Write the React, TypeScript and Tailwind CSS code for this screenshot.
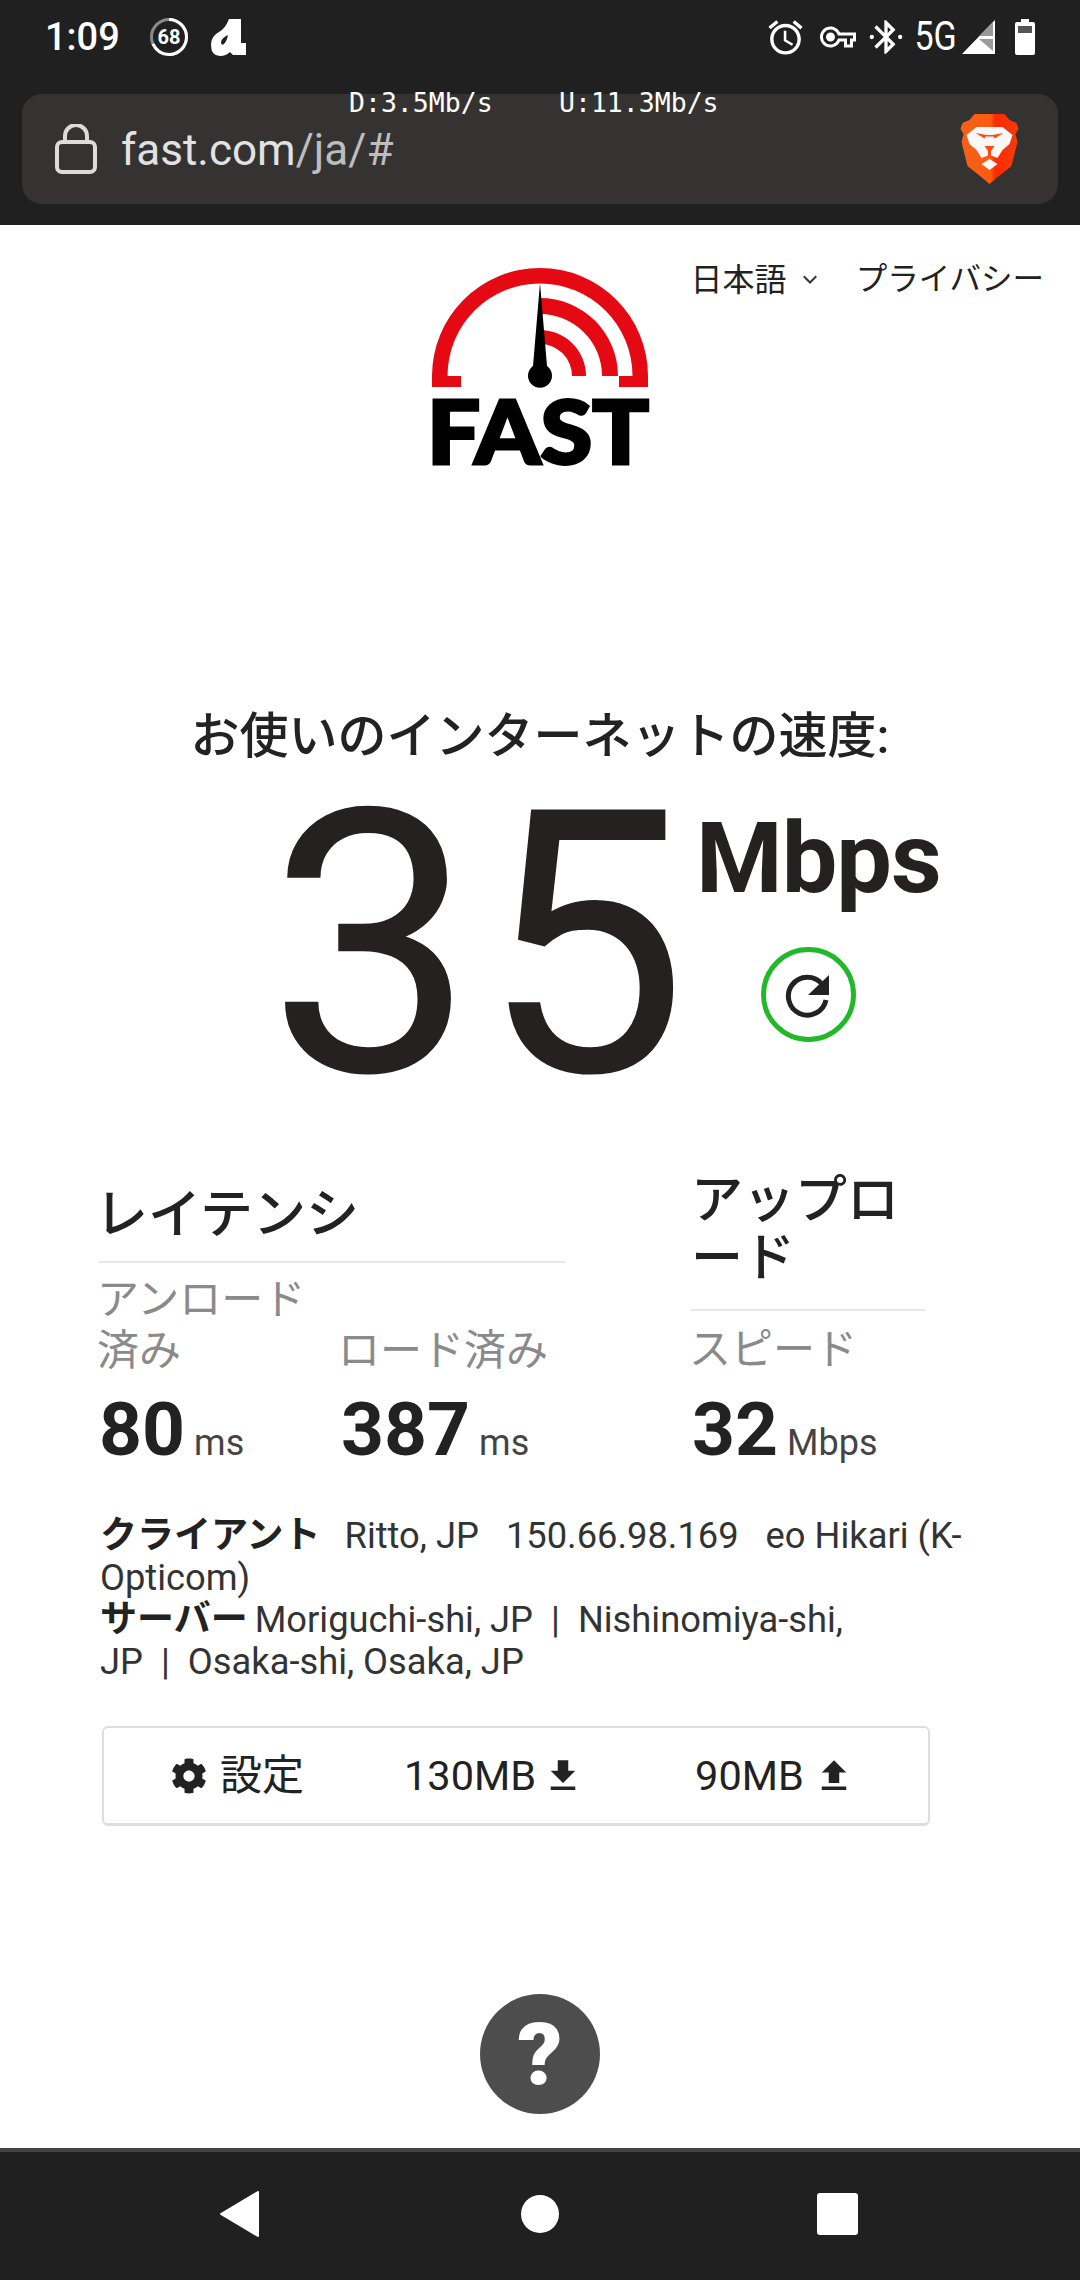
import { FaCog } from "react-icons/fa";

const sans = "font-['Roboto','Noto_Sans_CJK_JP',sans-serif]";

function Icon({ d, className }: { d: string; className: string }) {
  return (
    <svg viewBox="0 0 24 24" className={className} fill="currentColor">
      <path d={d} />
    </svg>
  );
}

function BraveLion() {
  return (
    <svg viewBox="0 0 58 70" className="w-[59px] h-[70px]">
      <defs>
        <linearGradient id="shield" x1="0" x2="1" y1="0" y2="0">
          <stop offset="0" stopColor="#f4601a" />
          <stop offset="0.52" stopColor="#ff5a10" />
          <stop offset="0.6" stopColor="#ff2a00" />
          <stop offset="1" stopColor="#f43c0c" />
        </linearGradient>
      </defs>
      <path
        d="M14 0h30l5 6 7 3 2 6-3 5 2 8-6 24-15 12-7 6-7-6-15-12-6-24 2-8-3-5 2-6 7-3z"
        fill="url(#shield)"
      />
      <path d="M16 13H42L52 21L49 30L42 36L37 44L29 41L21 44L16 36L9 30L6 21Z" fill="#f8f8f8" />
      <path d="M15 19L26 21H32L43 19L34 24.500L33 22.500H25L24 24.500Z" fill="#ff4a10" />
      <path d="M24 32H34L30.500 37V43H27.500V37Z" fill="#ff4a10" />
      <path d="M21 50L29 45L37 50L29 56Z" fill="#f8f8f8" />
    </svg>
  );
}

function FastLogo() {
  return (
    <svg viewBox="0 0 216 198" className="w-[216px] h-[198px] overflow-visible">
      <g fill="#e50914">
        <path d="M0 119V108A108 108 0 0 1 216 108V119H187V108H200.500A92.500 92.500 0 0 0 15.500 108H29V119Z" />
        <path d="M108 30A78 78 0 0 1 186 108H170A62 62 0 0 0 108 46Z" />
        <path d="M108 62A46 46 0 0 1 154 108H140A32 32 0 0 0 108 76Z" />
      </g>
      <path d="M108 15L115 98A12 12 0 1 1 101 98Z" fill="#000" />
      <text
        x="-5"
        y="196"
        textLength="222"
        lengthAdjust="spacingAndGlyphs"
        className="font-['Lato',sans-serif] font-black text-[87px]"
        fill="#000"
        stroke="#000"
        strokeWidth="3"
      >
        FAST
      </text>
    </svg>
  );
}

function StatusBar() {
  return (
    <div className="h-[94px] flex items-start justify-between pl-[45px] pr-[44px] pt-[17px] text-white">
      <div className="flex items-center h-[40px]">
        <span className="text-[38px] font-medium leading-none">1:09</span>
        {/* battery-style ring around the percentage */}
        <svg viewBox="0 0 40 40" className="ml-[29px] w-[40px] h-[40px]" fill="none" strokeWidth="3">
          <circle cx="20" cy="20" r="17.500" stroke="#8a8a8a" />
          <circle cx="20" cy="20" r="17.500" stroke="#fff" strokeDasharray="74.800 110" transform="rotate(-90 20 20)" />
          <text x="20" y="27" textAnchor="middle" fill="#fff" stroke="none" className="text-[20px] font-bold">68</text>
        </svg>
        <svg viewBox="0 0 36 37" className="ml-[22px] w-[36px] h-[37px]" fill="#fff">
          <path
            fillRule="evenodd"
            d="M18 0H30V24H35V36H22L19 33Q15 37 9 37Q0 37 0 26Q0 17 8 13Q14 10 18 0ZM17 16Q10 19 10 24Q11 27 13 25Q16 22 17 16Z"
          />
        </svg>
      </div>
      <div className="flex items-center h-[40px]">
        <Icon
          className="w-[41px] h-[41px] ml-[-1px]"
          d="M22 5.720l-4.600-3.860-1.290 1.530 4.600 3.860L22 5.720zM7.880 3.390L6.600 1.860 2 5.710l1.290 1.530 4.590-3.850zM12.500 8H11v6l4.750 2.850.75-1.230-4-2.370V8zM12 4c-4.970 0-9 4.030-9 9s4.020 9 9 9c4.970 0 9-4.030 9-9s-4.030-9-9-9zm0 16c-3.870 0-7-3.130-7-7s3.130-7 7-7 7 3.130 7 7-3.130 7-7 7z"
        />
        <Icon
          className="ml-[14px] w-[36px] h-[36px]"
          d="M22 19h-6v-4h-2.680c-1.140 2.420-3.600 4-6.320 4-3.860 0-7-3.140-7-7s3.140-7 7-7c2.720 0 5.170 1.580 6.320 4H24v6h-2v4zm-4-2h2v-4h2v-2H11.940l-.23-.67C11.010 8.340 9.110 7 7 7c-2.760 0-5 2.240-5 5s2.240 5 5 5c2.110 0 4.010-1.340 4.710-3.330l.23-.67H18v4zM7 15c-1.650 0-3-1.350-3-3s1.350-3 3-3 3 1.350 3 3-1.350 3-3 3z"
        />
        <svg viewBox="0 0 24 24" className="ml-[10px] w-[40px] h-[40px]" fill="#fff">
          <path d="M17.710 7.710L12 2h-1v7.590L6.410 5 5 6.410 10.590 12 5 17.590 6.410 19 11 14.410V22h1l5.710-5.710-4.300-4.290 4.300-4.290zM13 5.830l1.880 1.880L13 9.590V5.830zm1.880 10.460L13 18.170v-3.760l1.880 1.880z" />
          <circle cx="3.500" cy="12" r="1.300" />
          <circle cx="20.500" cy="12" r="1.300" />
        </svg>
        <span className="ml-[5px] text-[40px] leading-none scale-x-[0.85] origin-center w-[46px] text-center">5G</span>
        <svg viewBox="0 0 34 34" className="ml-[5px] w-[34px] h-[34px]">
          <path d="M0 34L33 0V34Z" fill="#fff" />
          <path d="M24 9l7-7V16H17ZM17 19H31V31Z" fill="#9a9a9a" />
        </svg>
        <svg viewBox="0 0 20 36" className="ml-[18px] w-[22px] h-[36px]">
          <path d="M6 0h8v3h4q2 0 2 2v29q0 2-2 2H2q-2 0-2-2V5q0-2 2-2h4Z" fill="#fff" />
          <rect x="3" y="7" width="14" height="7" fill="#555" />
        </svg>
      </div>
    </div>
  );
}

function UrlBar() {
  return (
    <div className="relative mx-[22px] h-[110px] rounded-[20px] bg-[#343332] flex items-center justify-between pl-[33px] pr-[39px]">
      <svg viewBox="0 0 42 50" className="w-[42px] h-[50px] text-[#dcdcdc]" fill="none" stroke="currentColor" strokeWidth="4">
        <rect x="2" y="18" width="38" height="30" rx="5" />
        <path d="M10 18V12a11 11 0 0 1 22 0v6" />
      </svg>
      <div className="ml-[24px] flex-1 text-[44px] leading-none text-[#e2e2e2] pt-[2px]">
        fast.com<span className="text-[#bdbdbd]">/ja/#</span>
      </div>
      <BraveLion />
      <span className="absolute left-[327px] top-[-8px] font-['DejaVu_Sans_Mono',monospace] text-[26.500px] leading-[34px] text-white whitespace-pre">
        D:3.5Mb/s
      </span>
      <span className="absolute left-[537px] top-[-8px] font-['DejaVu_Sans_Mono',monospace] text-[26.500px] leading-[34px] text-white whitespace-pre">
        U:11.3Mb/s
      </span>
    </div>
  );
}

function Stats() {
  return (
    <div className="mt-[40px] ml-[99px] flex items-end text-[#222]">
      <div className="w-[466px]">
        <div className="text-[53px] leading-[60px] font-medium pt-[3px] pb-[16px] border-b-2 border-[#e8e8e8]">
          <span className="ml-[-4px]">レイテンシ</span>
        </div>
        <div className="flex items-end">
          <div className="w-[242px]">
            <div className="text-[42px] leading-[51px] text-[#8a8a8a] w-[220px] pt-[11px] ml-[-2px]">アンロード済み</div>
            <Value n="80" u="ms" />
          </div>
          <div>
            <div className="text-[42px] leading-[51px] text-[#8a8a8a] ml-[-3px]">ロード済み</div>
            <Value n="387" u="ms" />
          </div>
        </div>
      </div>
      <div className="ml-[127px] w-[233px]">
        <div className="text-[52px] leading-[58px] font-medium pb-[21px] border-b-2 border-[#e8e8e8] ml-[-1px]">
          アップロード
        </div>
        <div className="text-[42px] leading-[52px] text-[#8a8a8a] pt-[13px] ml-[-3px]">スピード</div>
        <Value n="32" u="Mbps" />
      </div>
    </div>
  );
}

function Value({ n, u }: { n: string; u: string }) {
  return (
    <div className="flex items-baseline h-[96px] pt-[10px]">
      <span className="text-[75px] leading-[86px] font-bold">{n}</span>
      <span className="ml-[9px] text-[36px] leading-none text-[#444]">{u}</span>
    </div>
  );
}

function Settings() {
  return (
    <div className="mt-[43px] ml-[102px] w-[828px] h-[100px] rounded-[6px] border-2 border-[#dedede] border-b-[3px] flex items-center text-[42px] text-[#222]">
      <FaCog className="ml-[67px] w-[36px] h-[36px]" />
      <span className="ml-[13px] leading-none">設定</span>
      <span className="ml-[100px] leading-none text-[41.500px]">130MB</span>
      <Icon className="ml-[6px] w-[42px] h-[42px]" d="M19 9h-4V3H9v6H5l7 7 7-7zM5 18v2h14v-2H5z" />
      <span className="ml-[111px] leading-none text-[41.500px]">90MB</span>
      <Icon className="ml-[9px] w-[42px] h-[42px]" d="M9 16h6v-6h4l-7-7-7 7h4zm-4 2h14v2H5z" />
    </div>
  );
}

export default function App() {
  return (
    <div className={`${sans} w-[1080px] h-[2280px] overflow-hidden flex flex-col bg-white`}>
      <header className="h-[225px] shrink-0 bg-[#202020]">
        <StatusBar />
        <UrlBar />
      </header>

      <main className="flex-1 flex flex-col">
        <div className="grid grid-cols-[1fr_216px_1fr] pt-[43px]">
          <div />
          <FastLogo />
          <div className="flex justify-end items-start pr-[36px] text-[32px] leading-none text-[#222] mt-[-4px]">
            <span>日本語</span>
            <svg viewBox="0 0 12 8" className="ml-[15px] mt-[11px] w-[16px] h-[10px]" fill="none" stroke="#333" strokeWidth="1.600">
              <path d="M1 1l5 5 5-5" />
            </svg>
            <span className="ml-[38px] text-[31.500px]">プライバシー</span>
          </div>
        </div>

        <h1 className="mt-[239px] text-center text-[49px] leading-[63px] font-medium text-[#222]">お使いのインターネットの速度:</h1>

        <div className="flex pl-[268px] text-[#232220]">
          <div className="text-[368px] leading-[356px] mb-[8px] tracking-[6px] font-normal w-[428px]">35</div>
          <div className="pt-[30px]">
            <div className="text-[99px] leading-[120px] font-bold tracking-[-1px]">Mbps</div>
            <div className="mt-[29px] ml-[65px] w-[95px] h-[95px] rounded-full border-[5px] border-[#22b82a] flex items-center justify-center">
              <svg viewBox="0 0 50 50" className="w-[50px] h-[50px]" fill="none">
                <path d="M38 14A19 19 0 1 0 42 30" stroke="#222" strokeWidth="5" />
                <path d="M45 5V25H24Z" fill="#222" />
              </svg>
            </div>
          </div>
        </div>

        <Stats />

        <div className="mt-[43px] mx-[100px] text-[36.300px] leading-[42px] text-[#333]">
          <div>
            <b className="font-bold text-[37px] text-[#222] mr-[24px]">クライアント</b>
            <span className="mr-[27px]">Ritto, JP</span>
            <span className="mr-[27px]">150.66.98.169</span>
            <span>eo Hikari (K-Opticom)</span>
          </div>
          <div className="w-[760px]">
            <b className="font-bold text-[37px] text-[#222] mr-[7px]">サーバー</b>
            Moriguchi-shi, JP&nbsp; |&nbsp; Nishinomiya-shi, JP&nbsp; |&nbsp; Osaka-shi, Osaka, JP
          </div>
        </div>

        <Settings />

        <div className="mt-[168px] mx-auto w-[120px] h-[120px] rounded-full bg-[#4d4d4d] flex items-center justify-center text-white text-[88px] font-black leading-none">
          ?
        </div>
      </main>

      <nav className="h-[132px] shrink-0 bg-[#202020] border-t-4 border-[#444] flex items-center justify-between pl-[220px] pr-[222px] pb-[4px]">
        <svg viewBox="0 0 39 46" className="w-[39px] h-[46px]" fill="#fff" stroke="#fff" strokeWidth="2" strokeLinejoin="round">
          <path d="M38 1V45L1 23Z" />
        </svg>
        <div className="w-[38px] h-[38px] rounded-full bg-white ml-[3px]" />
        <div className="w-[41px] h-[42px] rounded-[3px] bg-white" />
      </nav>
    </div>
  );
}
